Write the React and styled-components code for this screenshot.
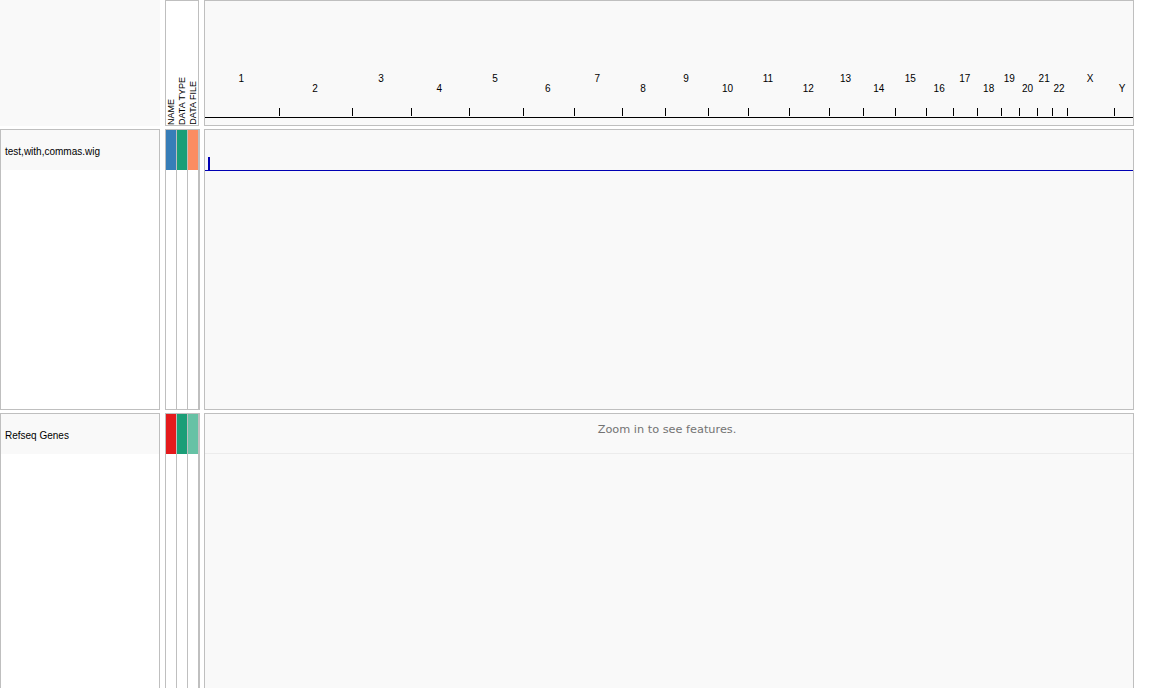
import React from "react";
import styled, { createGlobalStyle } from "styled-components";

const GlobalStyle = createGlobalStyle`
  html, body { margin: 0; padding: 0; background: #ffffff; }
  body { font-family: "Liberation Sans", Arial, sans-serif; overflow: hidden; }
  * { box-sizing: border-box; }
`;

const BORDER = "#bfbfbf";
const PANEL = "#f9f9f9";

const Page = styled.div`
  display: flex;
  flex-direction: column;
  gap: 3px;
  width: 1150px;
`;

const Row = styled.div`
  display: flex;
  align-items: stretch;
  height: ${(p) => p.$height}px;
  flex: none;
`;

const NameHeader = styled.div`
  width: 160px;
  background: ${PANEL};
`;

const AttrHeader = styled.div`
  width: 34px;
  margin-left: 5px;
  border: 1px solid ${BORDER};
  display: flex;
  align-items: flex-end;
  background: #ffffff;
`;

const AttrLabel = styled.span`
  width: 11px;
  writing-mode: vertical-rl;
  transform: rotate(180deg);
  font-size: 9px;
  line-height: 11px;
  color: #000;
  white-space: nowrap;
`;

const DataHeader = styled.div`
  width: 930px;
  margin-left: 5px;
  border: 1px solid ${BORDER};
  background: ${PANEL};
  overflow: hidden;
`;

const NameCell = styled.div`
  width: 160px;
  border: 1px solid ${BORDER};
  background: #ffffff;
`;

const TrackLabel = styled.div`
  height: 40px;
  display: flex;
  align-items: center;
  padding: 3px 0 0 4px;
  font-size: 10px;
  color: #000;
  background: ${PANEL};
  white-space: nowrap;
`;

const AttrCell = styled.div`
  width: 35px;
  margin-left: 5px;
  border: 1px solid ${BORDER};
  display: flex;
  background: #ffffff;
`;

const AttrColumn = styled.div`
  width: 11px;
  border-right: 1px solid ${BORDER};
`;

const Swatch = styled.div`
  height: 40px;
  background: ${(p) => p.$color};
`;

const DataCell = styled.div`
  width: 930px;
  margin-left: 4px;
  border: 1px solid ${BORDER};
  background: ${PANEL};
  overflow: hidden;
`;

const FeatureBand = styled.div`
  height: 40px;
  border-bottom: 1px solid #ececec;
  text-align: center;
  padding: 9px 4px 0 0;
  font-family: "DejaVu Sans", "Liberation Sans", sans-serif;
  font-size: 11.3px;
  line-height: 14px;
  color: #737373;
`;

const CHROMS = [
  ["1", 249250621], ["2", 243199373], ["3", 198022430], ["4", 191154276],
  ["5", 180915260], ["6", 171115067], ["7", 159138663], ["8", 146364022],
  ["9", 141213431], ["10", 135534747], ["11", 135006516], ["12", 133851895],
  ["13", 115169878], ["14", 107349540], ["15", 102531392], ["16", 90354753],
  ["17", 81195210], ["18", 78077248], ["19", 59128983], ["20", 63025520],
  ["21", 48129895], ["22", 51304566], ["X", 155270560], ["Y", 59373566],
];

function Ruler() {
  const total = CHROMS.reduce((s, c) => s + c[1], 0);
  const scale = 927 / total;
  let cum = 0;
  const items = CHROMS.map(([name, len], i) => {
    const start = cum * scale;
    cum += len;
    const end = cum * scale;
    const tickX = Math.floor(end) + 0.5;
    return { name, center: (start + end) / 2 - 1, tickX, upper: i % 2 === 0, last: i === CHROMS.length - 1 };
  });
  return (
    <svg width="928" height="124" viewBox="0 0 928 124" style={{ display: "block" }}>
      {items.map((it) => (
        <text
          key={it.name}
          x={it.center}
          y={it.upper ? 81 : 91}
          textAnchor="middle"
          fontFamily="'Liberation Sans', Arial, sans-serif"
          fontSize="10"
          fill="#000"
        >
          {it.name}
        </text>
      ))}
      {items.filter((it) => !it.last).map((it) => (
        <line key={"t" + it.name} x1={it.tickX} x2={it.tickX} y1={107} y2={115} stroke="#000" strokeWidth="1" />
      ))}
      <line x1="0" x2="928" y1="116.5" y2="116.5" stroke="#000" strokeWidth="1" />
    </svg>
  );
}

function WigTrack() {
  return (
    <svg width="928" height="41" viewBox="0 0 928 41" style={{ display: "block" }}>
      <rect x="3" y="27" width="2" height="13" fill="rgb(0,0,180)" />
      <rect x="0" y="40" width="928" height="1" fill="rgb(0,0,180)" />
    </svg>
  );
}

function Attributes({ colors }) {
  return (
    <AttrCell>
      {colors.map((c, i) => (
        <AttrColumn key={i}>
          <Swatch $color={c} />
        </AttrColumn>
      ))}
    </AttrCell>
  );
}

export default function App() {
  return (
    <>
      <GlobalStyle />
      <Page>
        <Row $height={126}>
          <NameHeader />
          <AttrHeader>
            <AttrLabel>NAME</AttrLabel>
            <AttrLabel>DATA TYPE</AttrLabel>
            <AttrLabel>DATA FILE</AttrLabel>
          </AttrHeader>
          <DataHeader>
            <Ruler />
          </DataHeader>
        </Row>
        <Row $height={281}>
          <NameCell>
            <TrackLabel>test,with,commas.wig</TrackLabel>
          </NameCell>
          <Attributes colors={["#377eb8", "#1b9e77", "#fc8d62"]} />
          <DataCell>
            <WigTrack />
          </DataCell>
        </Row>
        <Row $height={300}>
          <NameCell>
            <TrackLabel>Refseq Genes</TrackLabel>
          </NameCell>
          <Attributes colors={["#e41a1c", "#1b9e77", "#66c2a5"]} />
          <DataCell>
            <FeatureBand>Zoom in to see features.</FeatureBand>
          </DataCell>
        </Row>
      </Page>
    </>
  );
}
